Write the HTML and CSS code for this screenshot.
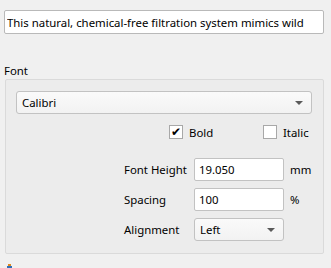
FILE: index.html
```html
<!DOCTYPE html>
<html lang="en">
<head>
    <meta charset="UTF-8">
    <title>Text Properties</title>
    <link rel="stylesheet" href="styles.css">
</head>
<body>
    <div class="panel">
        <input class="text-input" type="text" value="This natural, chemical-free filtration system mimics wild">
        <div class="section-label">Font</div>
        <div class="group">
            <div class="combo wide">
                <span>Calibri</span>
                <span class="arrow"></span>
            </div>
            <div class="checks">
                <label class="check">
                    <span class="box checked">&#10004;</span>
                    <span>Bold</span>
                </label>
                <label class="check">
                    <span class="box"></span>
                    <span>Italic</span>
                </label>
            </div>
            <div class="form">
                <span class="form-label">Font Height</span>
                <input class="num-input" type="text" value="19.050">
                <span class="unit">mm</span>

                <span class="form-label">Spacing</span>
                <input class="num-input" type="text" value="100">
                <span class="unit">%</span>

                <span class="form-label">Alignment</span>
                <div class="combo small">
                    <span>Left</span>
                    <span class="arrow"></span>
                </div>
                <span class="unit"></span>
            </div>
        </div>
        <div class="next-row">
            <svg width="8" height="6" viewBox="0 0 8 6">
                <rect x="2" y="1" width="3" height="2" fill="#e08a1e"/>
                <rect x="1" y="3" width="5" height="3" fill="#2f6fb7"/>
            </svg>
        </div>
    </div>
</body>
</html>
```

FILE: styles.css
```css
body {
    margin: 0;
    background-color: #f0f0f0;
    font-family: "Noto Sans", "DejaVu Sans", sans-serif;
    font-size: 11.4px;
    color: #000;
    overflow: hidden;
}
.panel {
    padding: 10px 7px 0 4px;
}
.text-input {
    display: block;
    box-sizing: border-box;
    width: 320px;
    height: 24px;
    margin: 0;
    padding: 0 2px;
    border: 1px solid #b9b9b9;
    border-radius: 2px;
    background: #fff;
    font-family: inherit;
    font-size: 11.4px;
    color: #000;
}
.section-label {
    margin-top: 29px;
    line-height: 16px;
    height: 16px;
}
.group {
    box-sizing: border-box;
    width: 319px;
    height: 175px;
    margin: 0 0 0 1px;
    padding: 11px 11px 0 10px;
    border: 1px solid #dadada;
    border-radius: 2px;
    background: #ececec;
}
.combo {
    box-sizing: border-box;
    height: 23px;
    display: flex;
    align-items: center;
    justify-content: space-between;
    padding: 0 8px 0 5px;
    border: 1px solid #c2c2c2;
    border-radius: 3px;
    background: linear-gradient(#fafafa, #f2f2f2);
}
.combo.wide {
    width: 296px;
}
.combo.small {
    width: 90px;
}
.arrow {
    width: 0;
    height: 0;
    border-left: 4px solid transparent;
    border-right: 4px solid transparent;
    border-top: 4px solid #5a5a5a;
}
.checks {
    display: flex;
    margin: 11px 0 0 153px;
    height: 14px;
}
.check {
    flex: none;
    display: flex;
    align-items: center;
    gap: 6px;
    width: 94px;
}
.check:last-child {
    width: auto;
}
.box {
    box-sizing: border-box;
    width: 14px;
    height: 14px;
    border: 1px solid #a8a8a8;
    background: #fff;
    font-size: 12px;
    line-height: 12px;
    text-align: center;
    font-weight: bold;
}
.form {
    display: grid;
    grid-template-columns: 70px 90px 30px;
    grid-auto-rows: 23px;
    row-gap: 7px;
    column-gap: 0;
    align-items: center;
    margin: 19px 0 0 108px;
}
.num-input {
    box-sizing: border-box;
    width: 90px;
    height: 23px;
    margin: 0;
    padding: 0 4px;
    border: 1px solid #c2c2c2;
    border-radius: 2px;
    background: #fff;
    font-family: inherit;
    font-size: 11.4px;
    color: #000;
}
.unit {
    padding-left: 6px;
}
.next-row {
    padding: 9px 0 0 2px;
    line-height: 0;
}
```
